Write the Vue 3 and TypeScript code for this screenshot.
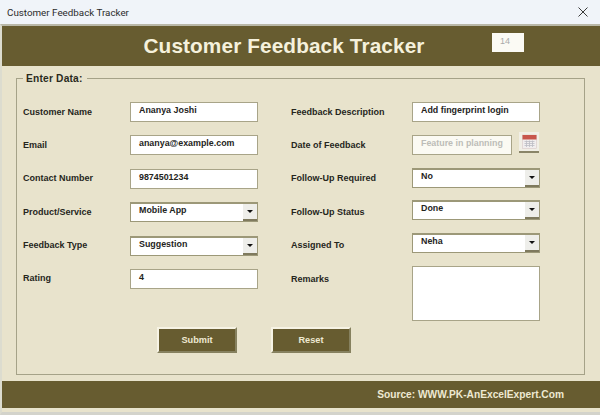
<script setup lang="ts">
interface Field {
  label: string
  value: string
  kind: 'text' | 'select' | 'date' | 'area'
}

const leftFields: Field[] = [
  { label: 'Customer Name', value: 'Ananya Joshi', kind: 'text' },
  { label: 'Email', value: 'ananya@example.com', kind: 'text' },
  { label: 'Contact Number', value: '9874501234', kind: 'text' },
  { label: 'Product/Service', value: 'Mobile App', kind: 'select' },
  { label: 'Feedback Type', value: 'Suggestion', kind: 'select' },
  { label: 'Rating', value: '4', kind: 'text' },
]

const rightFields: Field[] = [
  { label: 'Feedback Description', value: 'Add fingerprint login', kind: 'text' },
  { label: 'Date of Feedback', value: 'Feature in planning', kind: 'date' },
  { label: 'Follow-Up Required', value: 'No', kind: 'select' },
  { label: 'Follow-Up Status', value: 'Done', kind: 'select' },
  { label: 'Assigned To', value: 'Neha', kind: 'select' },
  { label: 'Remarks', value: '', kind: 'area' },
]

const columns = [
  { id: 'left', fields: leftFields, labelDrift: 0 },
  { id: 'right', fields: rightFields, labelDrift: 1.2 },
]
</script>

<template>
  <div class="window">
    <div class="titlebar">
      <span class="window-title">Customer Feedback Tracker</span>
      <svg class="close" width="12" height="12" viewBox="0 0 12 12" aria-label="Close">
        <path d="M1.5 1.5 L10.5 10.5 M10.5 1.5 L1.5 10.5" stroke="#3a3a3a" stroke-width="1" fill="none" />
      </svg>
    </div>

    <div class="client">
      <header class="banner">
        <h1 class="banner-title">Customer Feedback Tracker</h1>
        <div class="record-id">14</div>
      </header>

      <main class="content">
        <fieldset class="panel">
          <legend class="legend">Enter Data:</legend>
          <div class="columns">
            <div v-for="col in columns" :key="col.id" class="column" :class="col.id">
              <div
                v-for="(field, i) in col.fields"
                :key="field.label"
                class="row"
                :class="{ 'row-area': field.kind === 'area' }"
              >
                <label
                  class="label"
                  :style="field.kind === 'area' ? undefined : { marginTop: `${i * col.labelDrift}px` }"
                >{{ field.label }}</label>

                <div v-if="field.kind === 'text'" class="box">{{ field.value }}</div>

                <div v-else-if="field.kind === 'select'" class="box box-select">
                  <span class="select-value">{{ field.value }}</span>
                  <span class="arrow-btn"><span class="arrow"></span></span>
                </div>

                <div v-else-if="field.kind === 'date'" class="date-wrap">
                  <div class="box box-muted">{{ field.value }}</div>
                  <button class="cal-btn" type="button" aria-label="Pick date">
                    <svg width="15" height="15" viewBox="0 0 15 15">
                      <rect x="0.5" y="1" width="14" height="13.5" fill="#f1eeee" stroke="#d9c9c6" stroke-width="0.6" />
                      <rect x="0.5" y="1" width="14" height="4.5" fill="#c8564c" />
                      <path
                        d="M2.5 7.5H12.5M2.5 9.5H12.5M2.5 11.5H12.5M4.5 6.5V13M7.5 6.5V13M10.5 6.5V13"
                        stroke="#bdbdc4"
                        stroke-width="0.8"
                      />
                    </svg>
                  </button>
                </div>

                <div v-else class="box box-area"></div>
              </div>
            </div>
          </div>

          <div class="actions">
            <button class="action" type="button">Submit</button>
            <button class="action" type="button">Reset</button>
          </div>
        </fieldset>
      </main>

      <footer class="footer">Source: WWW.PK-AnExcelExpert.Com</footer>
    </div>
  </div>
</template>

<style>
html,
body {
  margin: 0;
  padding: 0;
  background: #e8e3cc;
}
</style>

<style scoped>
.window {
  width: 600px;
  height: 415px;
  display: flex;
  flex-direction: column;
  overflow: hidden;
  font-family: "Liberation Sans", Arial, sans-serif;
  background: #e8e3cc;
}

.titlebar {
  height: 24px;
  flex: none;
  display: flex;
  align-items: center;
  justify-content: space-between;
  padding: 0 11px 0 7px;
  background: #f0f4f9;
}

.window-title {
  font-family: Roboto, "Noto Sans", sans-serif;
  font-size: 9.8px;
  color: #2b2b2b;
}

.client {
  flex: 1;
  display: flex;
  flex-direction: column;
  min-height: 0;
  padding-bottom: 4px;
  border-top: 2px solid #b9b8a8;
  border-left: 2px solid #dcdccf;
  border-bottom: 3px solid #d3d3cb;
}

.banner {
  height: 40px;
  flex: none;
  display: flex;
  align-items: center;
  justify-content: center;
  position: relative;
  background: #675c30;
}

.banner-title {
  margin: 0 34px 0 0;
  font-size: 20.8px;
  font-weight: 700;
  letter-spacing: 0.1px;
  color: #f5f1dc;
}

.record-id {
  position: absolute;
  left: 490px;
  top: 7px;
  box-sizing: border-box;
  width: 32px;
  height: 19px;
  padding-left: 8px;
  background: #fbfaf4;
  font-size: 9px;
  line-height: 17px;
  color: #a9a9a9;
}

.content {
  flex: 1;
  min-height: 0;
  padding: 7px 15px 0 14px;
}

.panel {
  box-sizing: border-box;
  margin: 0;
  height: 302px;
  padding: 18px 0 0 6px;
  border: 1px solid #a5a288;
  min-width: 0;
}

.legend {
  margin-left: 0;
  padding: 0 4px 0 3px;
  font-size: 10.2px;
  font-weight: 700;
  letter-spacing: 0.2px;
  color: #2a2a1c;
}

.columns {
  display: flex;
}

.column {
  display: flex;
  flex-direction: column;
}

.column.left {
  width: 268px;
  gap: 13.4px;
}

.column.right {
  gap: 12.8px;
}

.row {
  display: flex;
  align-items: center;
  height: 20px;
}

.row-area {
  height: 55px;
  align-items: flex-start;
}

.row-area .label {
  margin-top: 9px;
}

.label {
  font-size: 9px;
  font-weight: 700;
  line-height: 1;
  color: #26261c;
}

.left .label {
  width: 107px;
}

.right .label {
  width: 121px;
}

.box {
  box-sizing: border-box;
  width: 128px;
  height: 20px;
  padding: 0 8px;
  border: 1px solid #a8a488;
  background: #fff;
  font-size: 8.9px;
  font-weight: 700;
  line-height: 14px;
  white-space: nowrap;
  color: #24241c;
}

.box-select {
  display: flex;
  justify-content: space-between;
  padding-right: 0;
  border-color: #9c9878;
  border-top-width: 2px;
  line-height: 12px;
}

.arrow-btn {
  width: 14px;
  height: 17px;
  display: flex;
  align-items: center;
  justify-content: center;
  background: #eeeeea;
  border-bottom: 2px solid #7f7a5e;
  box-sizing: border-box;
}

.arrow {
  width: 0;
  height: 0;
  border-left: 3.5px solid transparent;
  border-right: 3.5px solid transparent;
  border-top: 3.5px solid #111;
}

.date-wrap {
  height: 20px;
  display: flex;
  align-items: flex-end;
  gap: 7px;
}

.box-muted {
  width: 100px;
  flex: none;
  background: #fbfaf3;
  color: #bdbdb8;
}

.cal-btn {
  box-sizing: border-box;
  width: 20px;
  height: 21px;
  flex: none;
  padding: 0;
  margin-bottom: 2px;
  display: flex;
  align-items: center;
  justify-content: center;
  background: #f1efe6;
  border: none;
  border-bottom: 2px solid #8a8568;
}

.box-area {
  height: 55px;
}

.actions {
  display: flex;
  gap: 34px;
  margin: 6px 0 0 134px;
}

.action {
  box-sizing: border-box;
  width: 80px;
  height: 26px;
  padding: 0;
  background: #675c30;
  border: 2px solid;
  border-color: #f6f3e4 #86815f #86815f #f6f3e4;
  font-family: inherit;
  font-size: 9.2px;
  font-weight: 700;
  color: #eee9d2;
}

.footer {
  height: 27px;
  flex: none;
  box-sizing: border-box;
  padding: 0 36px 0 0;
  display: flex;
  align-items: center;
  justify-content: flex-end;
  background: #675c30;
  font-size: 10.2px;
  font-weight: 700;
  color: #eee9d2;
}
</style>
